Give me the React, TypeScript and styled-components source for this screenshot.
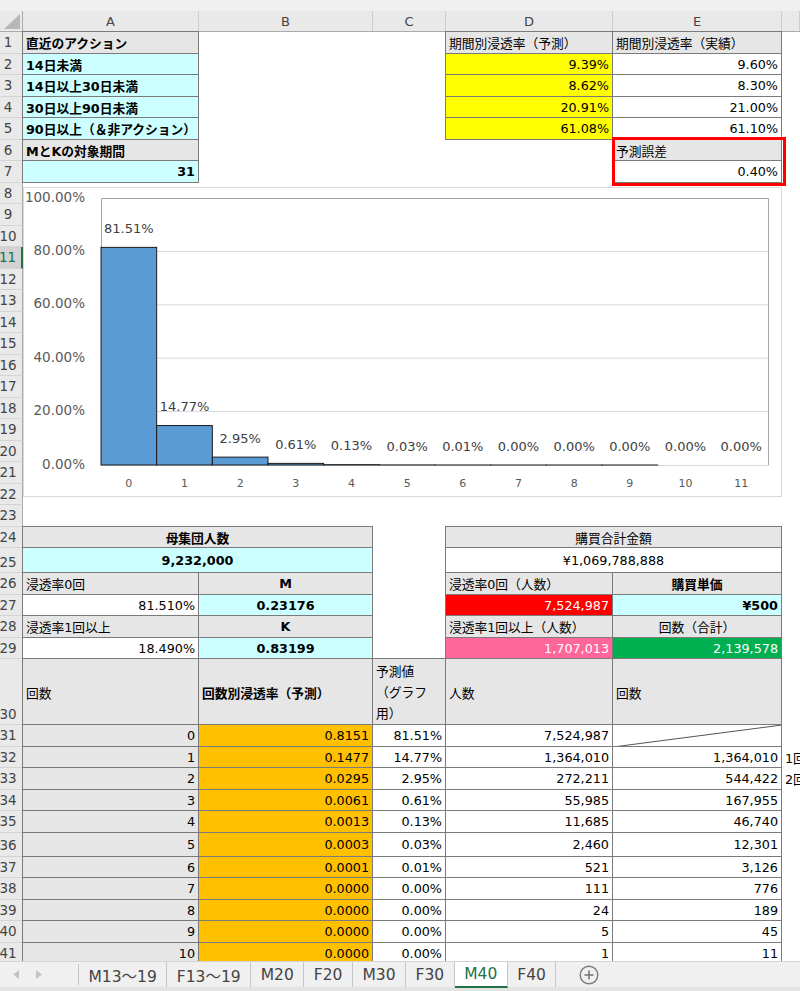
import React from "react";
import styled, { createGlobalStyle, css } from "styled-components";

const GlobalStyle = createGlobalStyle`
  html, body {
    margin: 0;
    padding: 0;
    background: #ffffff;
  }
  body {
    font-family: "DejaVu Sans", "Noto Sans CJK JP", sans-serif;
  }
`;

const COLS = "23px 176px 174px 73px 167px 169px 1fr";
const LINE = "#7a7a7a";
const G = "#e7e6e6";
const CY = "#ccffff";
const YEL = "#ffff00";
const ORG = "#ffc000";
const RED = "#ff0000";
const PINK = "#ff6699";
const GRN = "#00b050";

const Page = styled.div`
  width: 800px;
  height: 991px;
  overflow: hidden;
  display: flex;
  flex-direction: column;
  background: #fff;
`;

const TopStrip = styled.div`
  flex: none;
  height: 11px;
  background: #f0f0f0;
`;

const Sheet = styled.div`
  flex: 1;
  overflow: hidden;
  font-size: 12.75px;
  color: #000;
`;

const ColHeader = styled.div`
  display: grid;
  grid-template-columns: ${COLS};
  height: 21px;
  background: #e9e9e9;
  border-bottom: 1px solid #ababab;
  box-sizing: border-box;
`;

const Corner = styled.div`
  display: flex;
  align-items: flex-end;
  justify-content: flex-end;
  border-right: 1px solid #ababab;
  padding: 0 2px 2px 0;
`;

const ColLetter = styled.div`
  display: flex;
  align-items: center;
  justify-content: center;
  border-right: 1px solid #cdcdcd;
  color: #444;
  font-size: 13px;
`;

const TopBlock = styled.div`
  position: relative;
`;

const RedBox = styled.div`
  position: absolute;
  left: 612px;
  top: 105px;
  width: 174px;
  height: 49px;
  border: 3px solid #ff0000;
  box-sizing: border-box;
  pointer-events: none;
  z-index: 2;
`;

const Row = styled.div<{ $h?: number }>`
  display: grid;
  grid-template-columns: ${COLS};
  height: ${(p) => p.$h ?? 21.5}px;
`;

const RowHead = styled.div<{ $active?: boolean; $h?: number }>`
  box-sizing: border-box;
  height: ${(p) => (p.$h ? `${p.$h}px` : "auto")};
  background: ${(p) => (p.$active ? "#d2d2d2" : "#e9e9e9")};
  color: ${(p) => (p.$active ? "#217346" : "#444")};
  border-right: ${(p) => (p.$active ? "2px solid #217346" : "1px solid #ababab")};
  border-bottom: 1px solid #d4d4d4;
  display: flex;
  align-items: flex-end;
  justify-content: center;
  padding: 0 6px 3px 0;
  font-size: 13.5px;
  line-height: 1;
  white-space: nowrap;
`;

type Align = "left" | "center" | "right";

const Cell = styled.div<{
  $bg?: string;
  $fg?: string;
  $bold?: boolean;
  $align?: Align;
  $line?: boolean;
  $span?: number;
  $diag?: boolean;
}>`
  position: relative;
  grid-column: span ${(p) => p.$span ?? 1};
  min-width: 0;
  background: ${(p) => p.$bg ?? "transparent"};
  color: ${(p) => p.$fg ?? "#000"};
  font-weight: ${(p) => (p.$bold ? 700 : 400)};
  display: flex;
  align-items: center;
  justify-content: ${(p) =>
    p.$align === "right" ? "flex-end" : p.$align === "center" ? "center" : "flex-start"};
  padding: 0 4px 0 3px;
  white-space: nowrap;
  ${(p) =>
    p.$diag &&
    css`
      background-image: linear-gradient(
        to bottom right,
        transparent calc(50% - 1px),
        #555 50%,
        transparent calc(50% + 1px)
      );
    `}
  ${(p) =>
    p.$line &&
    css`
      &::after {
        content: "";
        position: absolute;
        left: -1px;
        top: -1px;
        right: 0;
        bottom: 0;
        border: 1px solid ${LINE};
        pointer-events: none;
      }
    `}
`;

const Wrap = styled.span`
  line-height: 21px;
  white-space: normal;
`;

const ChartBand = styled.div`
  display: grid;
  grid-template-columns: 23px 1fr;
  height: ${15 * 21.5}px;
`;

const BandHeads = styled.div`
  display: flex;
  flex-direction: column;
`;

const ChartHolder = styled.div`
  padding-top: 4.5px;
`;

const ChartFrame = styled.div`
  width: 759px;
  height: 310px;
  border: 1px solid #d9d9d9;
  box-sizing: border-box;
  background: #fff;
`;

const TabBar = styled.div`
  flex: none;
  height: 30px;
  display: flex;
  align-items: stretch;
  background: #f0f0f0;
  border-top: 1px solid #d4d4d4;
  border-bottom: 4px solid #e3e3e3;
  box-sizing: border-box;
  font-size: 15.5px;
`;

const NavArrows = styled.div`
  width: 79px;
  display: flex;
  align-items: center;
  gap: 17px;
  padding-left: 13px;
  box-sizing: border-box;
  border-right: 1px solid #c6c6c6;
  margin: 2px 0;
`;

const Tab = styled.div<{ $active?: boolean }>`
  display: flex;
  align-items: center;
  padding: 0 9.5px;
  color: ${(p) => (p.$active ? "#217346" : "#444")};
  background: ${(p) => (p.$active ? "#ffffff" : "transparent")};
  border-right: 1px solid #c6c6c6;
  box-sizing: border-box;
  white-space: nowrap;
  ${(p) =>
    p.$active &&
    css`
      border-bottom: 2px solid #217346;
      margin-bottom: -1px;
    `}
`;

const AddSheet = styled.div`
  display: flex;
  align-items: center;
  margin-left: 23px;
`;

type CellDef = {
  t?: React.ReactNode;
  bg?: string;
  fg?: string;
  b?: boolean;
  a?: Align;
  l?: boolean;
  s?: number;
  d?: boolean;
};

const SheetRow = ({
  n,
  h,
  cells,
}: {
  n: number;
  h?: number;
  cells: CellDef[];
}) => {
  const used = cells.reduce((acc, c) => acc + (c.s ?? 1), 0);
  const filled = [...cells, ...Array.from({ length: Math.max(0, 6 - used) }, () => ({}))];
  return (
    <Row $h={h}>
      <RowHead>{n}</RowHead>
      {filled.map((c: CellDef, i) => (
        <Cell
          key={i}
          $bg={c.bg}
          $fg={c.fg}
          $bold={c.b}
          $align={c.a}
          $line={c.l}
          $span={c.s}
          $diag={c.d}
        >
          {c.t}
        </Cell>
      ))}
    </Row>
  );
};

const topRows: CellDef[][] = [
  [
    { t: "直近のアクション", bg: G, b: true, l: true },
    {},
    {},
    { t: "期間別浸透率（予測）", bg: G, l: true },
    { t: "期間別浸透率（実績）", bg: G, l: true },
  ],
  [
    { t: "14日未満", bg: CY, b: true, l: true },
    {},
    {},
    { t: "9.39%", bg: YEL, a: "right", l: true },
    { t: "9.60%", a: "right", l: true },
  ],
  [
    { t: "14日以上30日未満", bg: CY, b: true, l: true },
    {},
    {},
    { t: "8.62%", bg: YEL, a: "right", l: true },
    { t: "8.30%", a: "right", l: true },
  ],
  [
    { t: "30日以上90日未満", bg: CY, b: true, l: true },
    {},
    {},
    { t: "20.91%", bg: YEL, a: "right", l: true },
    { t: "21.00%", a: "right", l: true },
  ],
  [
    { t: "90日以上（＆非アクション）", bg: CY, b: true, l: true },
    {},
    {},
    { t: "61.08%", bg: YEL, a: "right", l: true },
    { t: "61.10%", a: "right", l: true },
  ],
  [
    { t: "MとKの対象期間", bg: G, b: true, l: true },
    {},
    {},
    {},
    { t: "予測誤差", bg: G, l: true },
  ],
  [
    { t: "31", bg: CY, b: true, a: "right", l: true },
    {},
    {},
    {},
    { t: "0.40%", a: "right", l: true },
  ],
];

const midRows: { h?: number; cells: CellDef[] }[] = [
  { cells: [] },
  {
    cells: [
      { t: "母集団人数", bg: G, b: true, a: "center", l: true, s: 2 },
      {},
      { t: "購買合計金額", bg: G, a: "center", l: true, s: 2 },
    ],
  },
  {
    h: 25,
    cells: [
      { t: "9,232,000", bg: CY, b: true, a: "center", l: true, s: 2 },
      {},
      { t: "¥1,069,788,888", a: "center", l: true, s: 2 },
    ],
  },
  {
    cells: [
      { t: "浸透率0回", bg: G, l: true },
      { t: "M", bg: G, b: true, a: "center", l: true },
      {},
      { t: "浸透率0回（人数）", bg: G, l: true },
      { t: "購買単価", bg: G, b: true, a: "center", l: true },
    ],
  },
  {
    cells: [
      { t: "81.510%", a: "right", l: true },
      { t: "0.23176", bg: CY, b: true, a: "center", l: true },
      {},
      { t: "7,524,987", bg: RED, fg: "#fff", a: "right", l: true },
      { t: "¥500", bg: CY, b: true, a: "right", l: true },
    ],
  },
  {
    cells: [
      { t: "浸透率1回以上", bg: G, l: true },
      { t: "K", bg: G, b: true, a: "center", l: true },
      {},
      { t: "浸透率1回以上（人数）", bg: G, l: true },
      { t: "回数（合計）", bg: G, a: "center", l: true },
    ],
  },
  {
    cells: [
      { t: "18.490%", a: "right", l: true },
      { t: "0.83199", bg: CY, b: true, a: "center", l: true },
      {},
      { t: "1,707,013", bg: PINK, fg: "#fff", a: "right", l: true },
      { t: "2,139,578", bg: GRN, fg: "#fff", a: "right", l: true },
    ],
  },
  {
    h: 66,
    cells: [
      { t: "回数", bg: G, l: true },
      { t: "回数別浸透率（予測）", bg: G, b: true, l: true },
      {
        t: (
          <Wrap>
            予測値
            <br />
            （グラフ
            <br />
            用）
          </Wrap>
        ),
        bg: G,
        l: true,
      },
      { t: "人数", bg: G, l: true },
      { t: "回数", bg: G, l: true },
    ],
  },
];

const rate = ["0.8151", "0.1477", "0.0295", "0.0061", "0.0013", "0.0003", "0.0001", "0.0000", "0.0000", "0.0000", "0.0000"];
const pct = ["81.51%", "14.77%", "2.95%", "0.61%", "0.13%", "0.03%", "0.01%", "0.00%", "0.00%", "0.00%", "0.00%"];
const people = ["7,524,987", "1,364,010", "272,211", "55,985", "11,685", "2,460", "521", "111", "24", "5", "1"];
const times = ["", "1,364,010", "544,422", "167,955", "46,740", "12,301", "3,126", "776", "189", "45", "11"];
const notes = ["", "1回", "2回"];

const bars = [
  { v: 0.8151, label: "81.51%" },
  { v: 0.1477, label: "14.77%" },
  { v: 0.0295, label: "2.95%" },
  { v: 0.0061, label: "0.61%" },
  { v: 0.0013, label: "0.13%" },
  { v: 0.0003, label: "0.03%" },
  { v: 0.0001, label: "0.01%" },
  { v: 0.00004, label: "0.00%" },
  { v: 0.00001, label: "0.00%" },
  { v: 0.000002, label: "0.00%" },
  { v: 0, label: "0.00%" },
  { v: 0, label: "0.00%" },
];

const Chart = () => {
  const x0 = 77;
  const x1 = 745;
  const top = 10;
  const base = 277;
  const H = base - top;
  const w = (x1 - x0) / bars.length;
  const font = '"DejaVu Sans", sans-serif';
  return (
    <svg width={757} height={308} style={{ display: "block" }}>
      {[0.2, 0.4, 0.6, 0.8].map((p) => (
        <line key={p} x1={x0} x2={x1} y1={base - H * p} y2={base - H * p} stroke="#d9d9d9" />
      ))}
      <polyline
        points={`${x0 + 0.5},${base} ${x0 + 0.5},${top + 0.5} ${x1 - 0.5},${top + 0.5} ${x1 - 0.5},${base}`}
        fill="none"
        stroke="#a6a6a6"
      />
      <line x1={x0} x2={x1} y1={base + 0.5} y2={base + 0.5} stroke="#d9d9d9" />
      {[0, 0.2, 0.4, 0.6, 0.8, 1].map((p) => (
        <text
          key={p}
          x={61}
          y={base - H * p + 3.5}
          textAnchor="end"
          fontSize={13.5}
          fontFamily={font}
          fill="#595959"
        >
          {(p * 100).toFixed(2)}%
        </text>
      ))}
      {bars.map((b, i) => {
        const bx = x0 + w * i;
        const bh = H * b.v;
        return (
          <g key={i}>
            {b.v > 0 && (
              <rect
                x={bx}
                y={base - bh}
                width={w}
                height={Math.max(bh, 0.01)}
                fill="#5b9bd5"
                stroke="#1a1a1a"
                strokeWidth={1}
              />
            )}
            <text
              x={bx + w / 2}
              y={base - bh - 14.3}
              textAnchor="middle"
              fontSize={13}
              fontFamily={font}
              fill="#404040"
            >
              {b.label}
            </text>
            <text
              x={bx + w / 2}
              y={298.5}
              textAnchor="middle"
              fontSize={11}
              fontFamily={font}
              fill="#595959"
            >
              {i}
            </text>
          </g>
        );
      })}
    </svg>
  );
};

const App = () => {
  const bandRows = Array.from({ length: 15 }, (_, i) => i + 8);
  return (
    <>
      <GlobalStyle />
      <Page>
        <TopStrip />
        <Sheet>
          <ColHeader>
            <Corner>
              <svg width={16} height={15}>
                <polygon points="16,0 16,15 0,15" fill="#b7b7b7" />
              </svg>
            </Corner>
            <ColLetter>A</ColLetter>
            <ColLetter>B</ColLetter>
            <ColLetter>C</ColLetter>
            <ColLetter>D</ColLetter>
            <ColLetter>E</ColLetter>
            <ColLetter />
          </ColHeader>

          <TopBlock>
            {topRows.map((cells, i) => (
              <SheetRow key={i} n={i + 1} cells={cells} />
            ))}
            <RedBox />
          </TopBlock>

          <ChartBand>
            <BandHeads>
              {bandRows.map((n) => (
                <RowHead key={n} $h={21.5} $active={n === 11}>
                  {n}
                </RowHead>
              ))}
            </BandHeads>
            <ChartHolder>
              <ChartFrame>
                <Chart />
              </ChartFrame>
            </ChartHolder>
          </ChartBand>

          {midRows.map((r, i) => (
            <SheetRow key={i} n={i + 23} h={r.h} cells={r.cells} />
          ))}

          {rate.map((r, i) => (
            <SheetRow
              key={i}
              n={i + 31}
              h={i === 5 ? 24 : 21.5}
              cells={[
                { t: String(i), bg: G, a: "right", l: true },
                { t: r, bg: ORG, a: "right", l: true },
                { t: pct[i], a: "right", l: true },
                { t: people[i], a: "right", l: true },
                { t: times[i], a: "right", l: true, d: i === 0 },
                { t: notes[i] ?? "" },
              ]}
            />
          ))}
        </Sheet>

        <TabBar>
          <NavArrows>
            <svg width={6} height={9}>
              <polygon points="6,0 6,9 0,4.5" fill="#c4c4c4" />
            </svg>
            <svg width={6} height={9}>
              <polygon points="0,0 0,9 6,4.5" fill="#c4c4c4" />
            </svg>
          </NavArrows>
          <Tab>M13〜19</Tab>
          <Tab>F13〜19</Tab>
          <Tab>M20</Tab>
          <Tab>F20</Tab>
          <Tab>M30</Tab>
          <Tab>F30</Tab>
          <Tab $active>M40</Tab>
          <Tab>F40</Tab>
          <AddSheet>
            <svg width={20} height={20}>
              <circle cx={10} cy={10} r={8.8} fill="none" stroke="#7a7a7a" strokeWidth={1.4} />
              <line x1={5.5} x2={14.5} y1={10} y2={10} stroke="#7a7a7a" strokeWidth={1.6} />
              <line x1={10} x2={10} y1={5.5} y2={14.5} stroke="#7a7a7a" strokeWidth={1.6} />
            </svg>
          </AddSheet>
        </TabBar>
      </Page>
    </>
  );
};

export default App;
